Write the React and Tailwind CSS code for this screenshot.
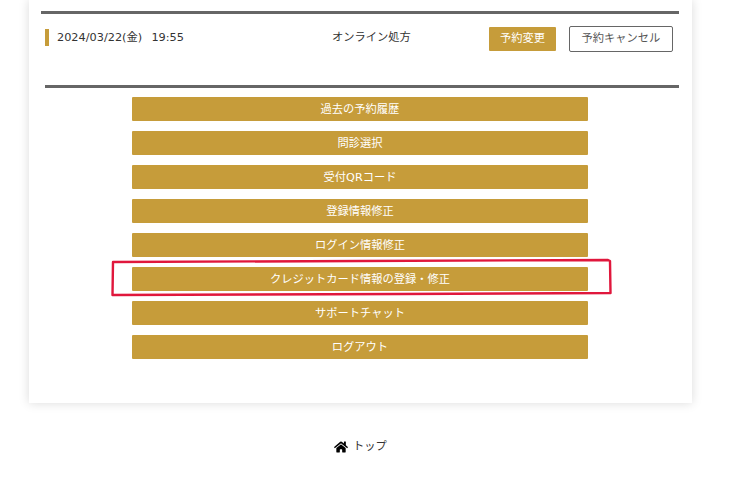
import React from "react";
import { FaHome } from "react-icons/fa";

const items = ["過去の予約履歴", "問診選択", "受付QRコード", "登録情報修正", "ログイン情報修正", "クレジットカード情報の登録・修正", "サポートチャット", "ログアウト"];
const font = { fontFamily: '"DejaVu Sans", "Noto Sans CJK JP", sans-serif' };

export default function App() {
  return (
    <div className="relative w-[731px] h-[503px] overflow-hidden bg-white text-[#333]" style={font}>
      <div className="ml-[29px] w-[663px] h-[403px] bg-white shadow-[0_0_10px_rgba(0,0,0,0.15)] pt-[11px] pl-[12px] pr-[13px]">
        <div className="border-t-[3px] border-[#666] h-[74px] pl-[4px] pt-[12px] flex items-start">
          <div className="border-l-[4px] border-[#c69c3a] h-[17px] mt-[3px] pl-[8px] w-[287px] text-[11.3px] [word-spacing:1px] leading-[15px] pt-[1px] whitespace-pre">2024/03/22(金)  19:55</div>
          <div className="w-[78px] text-[11.25px] leading-[18px] mt-[3px] text-center whitespace-nowrap">オンライン処方</div>
          <div className="ml-[79px] w-[67px] h-[24px] mt-[1px] bg-[#c69c3a] rounded-[1px] text-white text-[11.25px] flex items-center justify-center pt-[1px]">予約変更</div>
          <div className="ml-[13px] w-[104px] h-[26px] border border-[#666] rounded-[2px] text-[#555] text-[11.25px] flex items-center justify-center pt-[1px]">予約キャンセル</div>
        </div>
        <div className="ml-[4px] border-t-[3px] border-[#666] pt-[9px] pl-[87px] flex flex-col gap-[10px]">
          {items.map((t) => (
            <div key={t} className="w-[456px] h-[24px] bg-[#c69c3a] rounded-[1px] text-white text-[11.25px] flex items-center justify-center pt-[3px]">{t}</div>
          ))}
        </div>
      </div>
      <div className="mt-[33px] h-[20px] flex items-center justify-center gap-[5px] pr-[10px] pt-[2px]">
        <FaHome className="text-[14px] text-black" />
        <span className="text-[11.25px] leading-[20px]">トップ</span>
      </div>
      <svg className="absolute left-0 top-0 pointer-events-none" width="731" height="503" fill="none">
        <path d="M113 262 L360 261 L608 260 L610 261 L610.5 293 L400 294 L112.5 295 Z" stroke="#e0173c" strokeWidth="2.4" strokeLinejoin="round" />
      </svg>
    </div>
  );
}
